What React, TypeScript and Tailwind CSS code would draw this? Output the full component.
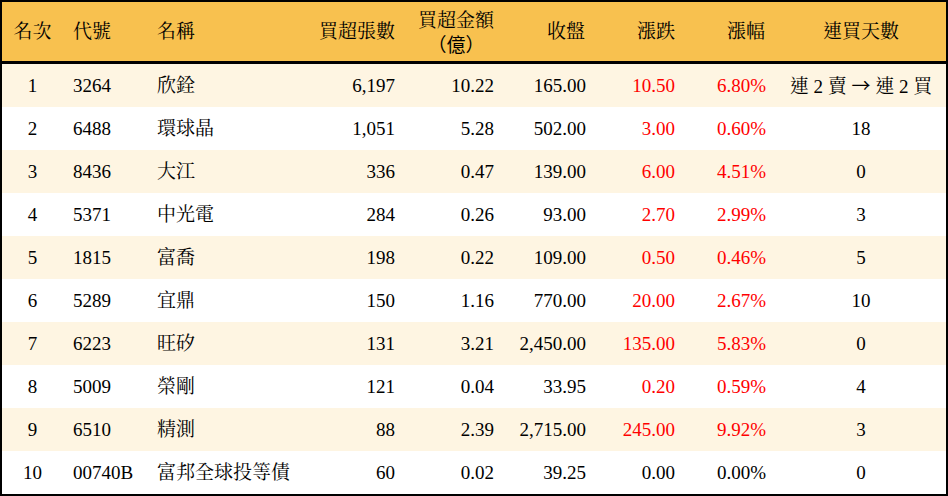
import React from "react";

type Row = {
  rank: string;
  code: string;
  name: string;
  lots: string;
  amount: string;
  close: string;
  chg: string;
  pct: string;
  days: React.ReactNode;
  red: boolean;
};

const cjk = '"Noto Sans CJK TC", sans-serif';

const rows: Row[] = [
  {
    rank: "1", code: "3264", name: "欣銓", lots: "6,197", amount: "10.22", close: "165.00", chg: "10.50", pct: "6.80%",
    days: (
      <>
        連 2 賣 <span style={{ fontFamily: cjk }}>→</span> 連 2 買
      </>
    ),
    red: true,
  },
  { rank: "2", code: "6488", name: "環球晶", lots: "1,051", amount: "5.28", close: "502.00", chg: "3.00", pct: "0.60%", days: "18", red: true },
  { rank: "3", code: "8436", name: "大江", lots: "336", amount: "0.47", close: "139.00", chg: "6.00", pct: "4.51%", days: "0", red: true },
  { rank: "4", code: "5371", name: "中光電", lots: "284", amount: "0.26", close: "93.00", chg: "2.70", pct: "2.99%", days: "3", red: true },
  { rank: "5", code: "1815", name: "富喬", lots: "198", amount: "0.22", close: "109.00", chg: "0.50", pct: "0.46%", days: "5", red: true },
  { rank: "6", code: "5289", name: "宜鼎", lots: "150", amount: "1.16", close: "770.00", chg: "20.00", pct: "2.67%", days: "10", red: true },
  { rank: "7", code: "6223", name: "旺矽", lots: "131", amount: "3.21", close: "2,450.00", chg: "135.00", pct: "5.83%", days: "0", red: true },
  { rank: "8", code: "5009", name: "榮剛", lots: "121", amount: "0.04", close: "33.95", chg: "0.20", pct: "0.59%", days: "4", red: true },
  { rank: "9", code: "6510", name: "精測", lots: "88", amount: "2.39", close: "2,715.00", chg: "245.00", pct: "9.92%", days: "3", red: true },
  { rank: "10", code: "00740B", name: "富邦全球投等債", lots: "60", amount: "0.02", close: "39.25", chg: "0.00", pct: "0.00%", days: "0", red: false },
];

const grid =
  "grid grid-cols-[61px_84px_159px_99px_99px_92px_89px_91px_170px]";

export default function App() {
  return (
    <div
      className="w-[948px] h-[496px] bg-white border-2 border-black text-black text-[19px] leading-none"
      style={{ fontFamily: '"Liberation Serif", "Noto Serif CJK TC", "Noto Sans CJK TC", serif' }}
    >
      <div className={`${grid} h-[62px] bg-[#F8C14F] border-b-[3px] border-black items-center`}>
        <div className="text-center">名次</div>
        <div className="pl-[10px]">代號</div>
        <div className="pl-[10px]">名稱</div>
        <div className="text-right pr-[10px]">買超張數</div>
        <div className="flex justify-end pr-[10px]">
          <div className="text-center leading-[23px]">
            <div>買超金額</div>
            <div style={{ fontFamily: cjk }}>（億）</div>
          </div>
        </div>
        <div className="text-right pr-[11px]">收盤</div>
        <div className="text-right pr-[10px]">漲跌</div>
        <div className="text-right pr-[11px]">漲幅</div>
        <div className="text-center">連買天數</div>
      </div>
      {rows.map((r, i) => (
        <div
          key={r.rank}
          className={`${grid} h-[43px] items-center ${i % 2 === 0 ? "bg-[#FEF5E2]" : "bg-white"}`}
        >
          <div className="text-center">{r.rank}</div>
          <div className="pl-[10px]">{r.code}</div>
          <div className="pl-[10px] whitespace-nowrap">{r.name}</div>
          <div className="text-right pr-[10px]">{r.lots}</div>
          <div className="text-right pr-[10px]">{r.amount}</div>
          <div className="text-right pr-[10px]">{r.close}</div>
          <div className={`text-right pr-[10px] ${r.red ? "text-[#FF0000]" : ""}`}>{r.chg}</div>
          <div className={`text-right pr-[10px] ${r.red ? "text-[#FF0000]" : ""}`}>{r.pct}</div>
          <div className="text-center whitespace-nowrap">{r.days}</div>
        </div>
      ))}
    </div>
  );
}
